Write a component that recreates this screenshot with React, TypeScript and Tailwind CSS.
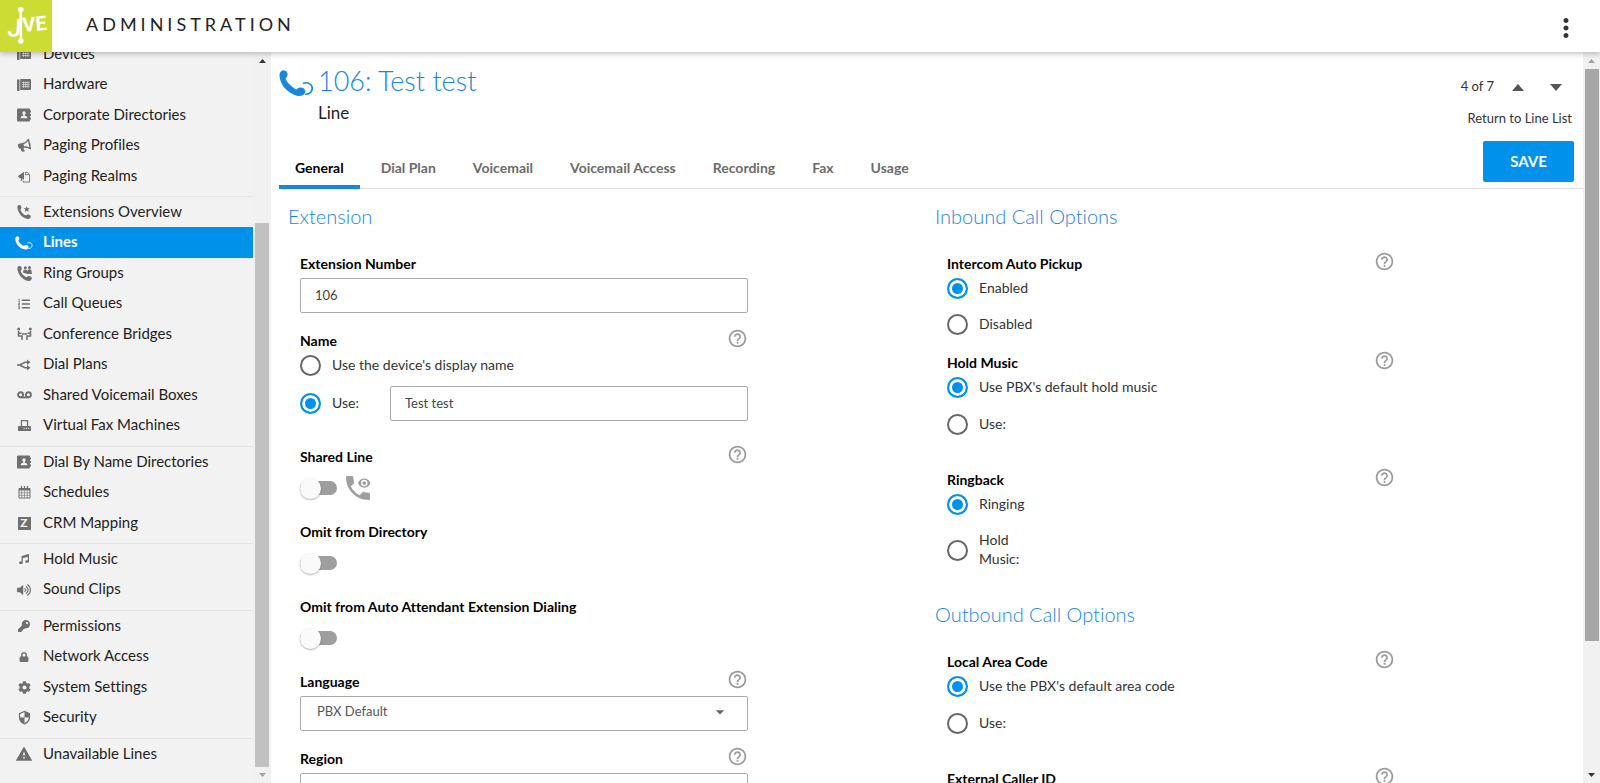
import type { ReactNode } from "react";
import clsx from "clsx";
import {
  FaBullhorn,
  FaCog,
  FaKey,
  FaListOl,
  FaLock,
  FaMusic,
  FaVolumeUp,
} from "react-icons/fa";
import {
  MdArrowDropDown,
  MdHelpOutline,
  MdMoreVert,
  MdSecurity,
  MdWarning,
} from "react-icons/md";

const HANDSET =
  "M6.62 10.79c1.44 2.83 3.76 5.14 6.59 6.59l2.2-2.2c.27-.27.67-.36 1.02-.24 1.12.37 2.33.57 3.57.57.55 0 1 .45 1 1V20c0 .55-.45 1-1 1-9.39 0-17-7.61-17-17 0-.55.45-1 1-1h3.5c.55 0 1 .45 1 1 0 1.25.2 2.45.57 3.57.11.35.03.74-.25 1.02l-2.2 2.2z";

// Rounded handset used by the small extension icons
const ROUND_HANDSET =
  "M3.500 6C3.300 4 5 2.600 6.600 3C8.300 3.500 9 5.600 8.500 7.300C8.200 8.300 7.200 8.600 7.600 9.700C8.800 12.500 11 14.900 13.800 16.200C14.900 16.700 15.200 15.500 16.300 15.200C18 14.700 20.300 15.600 20.700 17.300C21 19.300 19.500 20.900 17.500 21C10.500 21 3.700 13 3.500 6Z";

const LineIcon = ({ className }: { className?: string }) => (
  <svg viewBox="0 0 35 27" className={className} fill="currentColor">
    <path d="M0.5 5C.5 2 3 0 5.500.4C8 1 9 3.500 8.500 5.500C8 7.200 6.500 7.800 6.700 9C8.500 13 12.500 17 17 19.500C18.300 18.500 19.500 17.200 22 17.400C25 17.600 27 20 26.200 22.500C25 25.500 21.500 26.600 18 25.800C8.500 23.500.5 14 .5 5Z" />
    <path
      d="M24 13.500C27 12 31.500 12.600 33 16.500C34.300 20.500 31 24.600 26 24.200"
      fill="none"
      stroke="currentColor"
      strokeWidth="1.600"
    />
  </svg>
);

const DeskPhoneIcon = () => (
  <svg viewBox="0 0 14 14" className="size-[14px]" fill="currentColor">
    <path d="M0 1.500h2.500V13h-1.500a1 1 0 0 1-1-1z" />
    <path d="M3.200 1H13a1 1 0 0 1 1 1v9a1 1 0 0 1-1 1H3.200z" />
    <path
      d="M5 4.500h7.500M5 6.500h7.500M5 8.500h7.500M6.500 3.500v6.500M8.700 3.500v6.500M11 3.500v6.500"
      stroke="#f2f2f2"
      strokeWidth=".6"
    />
  </svg>
);

const DirectoryIcon = () => (
  <svg viewBox="0 0 14 14" className="size-[14px]" fill="currentColor">
    <path d="M1 .5h11a1 1 0 0 1 1 1v11a1 1 0 0 1-1 1H1a1 1 0 0 1-1-1v-11a1 1 0 0 1 1-1z" />
    <path d="M13 2.500h1v2h-1zM13 6h1v2h-1zM13 9.500h1v2h-1z" />
    <circle cx="7" cy="5" r="1.700" fill="#f2f2f2" />
    <path d="M6.300 6h1.400v1.700c1.800.2 2.700.8 2.700 2.600H3.600c0-1.800.9-2.400 2.700-2.600z" fill="#f2f2f2" />
  </svg>
);

const PagingRealmIcon = () => (
  <svg viewBox="0 0 14 14" className="size-[13px]" fill="currentColor">
    <path d="M0 6.500L6.500 2v8.500L4.500 9.200v2.300H3V8.600L1 8.400z" />
    <path
      d="M8 5h4.500v8H5.500v-1.500M8 5V2.500h2.200L12.500 5"
      fill="none"
      stroke="currentColor"
    />
  </svg>
);

const PhoneStarIcon = () => (
  <svg viewBox="3 3 18 18" className="size-[14px]" fill="currentColor">
    <path d={ROUND_HANDSET} />
    <path d="M15.500 4.500l1.100 2.600 2.900.2-2.200 1.900.7 2.800-2.500-1.500-2.500 1.500.7-2.800-2.200-1.900 2.900-.2z" />
  </svg>
);

const PhoneGroupIcon = () => (
  <svg viewBox="3 3 18 18" className="size-[15px]" fill="currentColor">
    <path d={ROUND_HANDSET} />
    <circle cx="13" cy="5.200" r="1.800" />
    <circle cx="18" cy="4.800" r="1.800" />
    <path d="M10.300 11c0-3 1-3.700 2.700-3.700 1.500 0 2.300 1 2.500 2.700 0-2.400 1-3 2.500-3 1.900 0 2.700 1 2.700 3.700v1.800h-5z" />
  </svg>
);

const ConferenceIcon = () => (
  <svg viewBox="0 0 15 14" className="h-[14px] w-[15px]" fill="currentColor">
    <circle cx="1.700" cy="2" r="1.500" />
    <circle cx="13.300" cy="2" r="1.500" />
    <path
      d="M1.500 4v5H5v4M13.500 4v5H10v4M2 6.200h2.500M13 6.200h-2.500M5 7h5"
      fill="none"
      stroke="currentColor"
      strokeWidth="1.500"
    />
  </svg>
);

const DialPlanIcon = () => (
  <svg viewBox="0 0 14 12" className="h-[12px] w-[14px]" fill="currentColor">
    <path
      d="M0 6h2.500L8 3.200h3M2.500 6L8 8.800h3"
      fill="none"
      stroke="currentColor"
      strokeWidth="1.600"
    />
    <path d="M10 .5L13.500 3.200 10 6zM10 6l3.500 2.800L10 11.500z" />
  </svg>
);

const VoicemailIcon = () => (
  <svg viewBox="0 0 15 8" className="h-2 w-[15px]" fill="none" stroke="currentColor" strokeWidth="1.900">
    <circle cx="3.600" cy="3.800" r="2.500" />
    <circle cx="11.400" cy="3.800" r="2.500" />
    <path d="M3.600 6.400h7.800" />
  </svg>
);

const FaxIcon = () => (
  <svg viewBox="0 0 14 14" className="size-[13px]" fill="currentColor">
    <path d="M3.700 8V1.700h6.600V8" fill="none" stroke="currentColor" strokeWidth="1.400" />
    <path d="M1 7.500h12a1 1 0 0 1 1 1V12a1 1 0 0 1-1 1H1a1 1 0 0 1-1-1V8.500a1 1 0 0 1 1-1z" />
    <path d="M6 10h1.200M8.500 10h1.200M11 10h1.200" stroke="#f2f2f2" strokeWidth="1.200" />
  </svg>
);

const CalendarIcon = () => (
  <svg viewBox="0 0 13 13" className="size-[13px]" fill="none" stroke="currentColor">
    <path d="M1 2.500h11v9.500H1z" />
    <path d="M1 3.500h11" strokeWidth="2" />
    <path d="M3.500 0v3M6.500 0v3M9.500 0v3" strokeWidth="1.200" />
    <path d="M1 6.800h11M1 9.300h11M3.700 4.500V12M6.500 4.500V12M9.300 4.500V12" strokeWidth=".6" />
  </svg>
);

const PhoneEyeIcon = () => (
  <svg viewBox="3 3 18 18" className="size-6 text-[#9e9e9e]" fill="currentColor">
    <path d={HANDSET} />
    <path
      fillRule="evenodd"
      d="M16.700 4.800c2.100 0 3.900 1.400 4.700 3.500-.8 2.100-2.600 3.500-4.700 3.500S12.800 10.400 12 8.300c.8-2.100 2.600-3.500 4.700-3.500zm0 1.100a2.400 2.400 0 1 0 0 4.800 2.400 2.400 0 0 0 0-4.800z"
    />
    <circle cx="16.700" cy="8.300" r="1.400" />
  </svg>
);

const CrmIcon = () => (
  <span className="flex size-[13px] items-center justify-center bg-[#6f6f6f] text-xs leading-none font-black text-[#f2f2f2]">
    Z
  </span>
);

type NavItem = { label: string; icon: ReactNode; active?: boolean };

const navGroups: NavItem[][] = [
  [
    { label: "Devices", icon: <DeskPhoneIcon /> },
    { label: "Hardware", icon: <DeskPhoneIcon /> },
    { label: "Corporate Directories", icon: <DirectoryIcon /> },
    {
      label: "Paging Profiles",
      icon: <FaBullhorn size={13} className="-rotate-12" />,
    },
    { label: "Paging Realms", icon: <PagingRealmIcon /> },
  ],
  [
    { label: "Extensions Overview", icon: <PhoneStarIcon /> },
    {
      label: "Lines",
      icon: <LineIcon className="h-[14px] w-[18px]" />,
      active: true,
    },
    { label: "Ring Groups", icon: <PhoneGroupIcon /> },
    { label: "Call Queues", icon: <FaListOl size={12} /> },
    { label: "Conference Bridges", icon: <ConferenceIcon /> },
    { label: "Dial Plans", icon: <DialPlanIcon /> },
    { label: "Shared Voicemail Boxes", icon: <VoicemailIcon /> },
    { label: "Virtual Fax Machines", icon: <FaxIcon /> },
  ],
  [
    { label: "Dial By Name Directories", icon: <DirectoryIcon /> },
    { label: "Schedules", icon: <CalendarIcon /> },
    { label: "CRM Mapping", icon: <CrmIcon /> },
  ],
  [
    { label: "Hold Music", icon: <FaMusic size={10} /> },
    { label: "Sound Clips", icon: <FaVolumeUp size={14} /> },
  ],
  [
    { label: "Permissions", icon: <FaKey size={12} /> },
    { label: "Network Access", icon: <FaLock size={10} /> },
    { label: "System Settings", icon: <FaCog size={13} /> },
    { label: "Security", icon: <MdSecurity size={15} /> },
  ],
  [{ label: "Unavailable Lines", icon: <MdWarning size={18} /> }],
];

const tabs = [
  "General",
  "Dial Plan",
  "Voicemail",
  "Voicemail Access",
  "Recording",
  "Fax",
  "Usage",
];

const JiveLogo = () => (
  <svg
    viewBox="0 0 52 52"
    className="size-[52px] bg-[#cddb35] font-['Roboto',sans-serif]"
    fill="#fff"
    role="img"
    aria-label="Jive"
  >
    <text x="7" y="36" fontSize="25" fontWeight="500" transform="rotate(4 7 36)">
      J
    </text>
    <path d="M20.800 9v32" stroke="#fff" strokeWidth="2.500" />
    <circle cx="20.800" cy="9.500" r="2.800" />
    <circle cx="20.800" cy="41" r="2.800" />
    <text x="23" y="32" fontSize="20" fontWeight="700" transform="rotate(-5 23 32)">
      VE
    </text>
  </svg>
);

const Arrow = ({ up, className }: { up?: boolean; className?: string }) => (
  <svg viewBox="0 0 12 7" className={className} fill="currentColor">
    <path d={up ? "M0 7L6 0l6 7z" : "M0 0h12L6 7z"} />
  </svg>
);

const ScrollRail = ({ side }: { side: "nav" | "page" }) => {
  const isNav = side === "nav";

  return (
    <div
      aria-hidden="true"
      className={clsx(
        "flex shrink-0 flex-col items-center bg-[#f1f1f1]",
        isNav ? "w-[18px]" : "w-[17px]",
      )}
    >
      <div className="flex h-[17px] items-center">
        <Arrow
          up
          className={clsx("h-1 w-[7px]", isNav ? "text-[#333]" : "text-[#a0a0a0]")}
        />
      </div>
      <div
        className={clsx("flex w-[14px] flex-1 flex-col", isNav && "justify-end")}
      >
        <div
          className={isNav ? "h-[78%] bg-[#c1c1c1]" : "h-[82%] bg-[#a8a8a8]"}
        />
      </div>
      <div className="flex h-4 items-center">
        <Arrow
          className={clsx("h-1 w-[7px]", isNav ? "text-[#a0a0a0]" : "text-[#333]")}
        />
      </div>
    </div>
  );
};

const Sidebar = () => (
  <aside className="flex w-[271px] shrink-0 overflow-hidden bg-[#f2f2f2]">
    <nav className="-mt-[13px] min-w-0 flex-1">
      {navGroups.map((group, index) => (
        <ul
          key={group[0].label}
          className={clsx("pb-[5px]", index > 0 && "border-t border-[#e2e2e2]")}
        >
          {group.map((item) => (
            <li key={item.label} className="h-[30px] even:h-[31px]">
              <a
                href="#"
                className={clsx(
                  "flex h-full items-center gap-[9px] pb-0.5 pl-[14px] text-[15px] whitespace-nowrap",
                  item.active
                    ? "bg-[#0091ea] font-bold text-white"
                    : "text-[#222]",
                )}
              >
                <span
                  className={clsx(
                    "flex w-5 justify-center pt-0.5",
                    !item.active && "text-[#6f6f6f]",
                  )}
                >
                  {item.icon}
                </span>
                {item.label}
              </a>
            </li>
          ))}
        </ul>
      ))}
    </nav>
    <ScrollRail side="nav" />
  </aside>
);

const FieldHeader = ({
  title,
  htmlFor,
  help,
}: {
  title: string;
  htmlFor?: string;
  help?: boolean;
}) => (
  <div className="flex h-5 items-start justify-between text-sm leading-5 font-bold text-black">
    {htmlFor ? <label htmlFor={htmlFor}>{title}</label> : <span>{title}</span>}
    {help && (
      <button
        type="button"
        aria-label={`Help: ${title}`}
        className="flex h-[14px] items-center text-[#9a9a9a]"
      >
        <MdHelpOutline size={21} />
      </button>
    )}
  </div>
);

const Radio = ({
  name,
  label,
  checked,
  narrow,
}: {
  name: string;
  label: string;
  checked?: boolean;
  narrow?: boolean;
}) => (
  <label
    className={clsx(
      "flex min-h-[21px] items-center gap-[11px] text-sm leading-[19px] text-[#333]",
      narrow && "w-20",
    )}
  >
    <input
      type="radio"
      name={name}
      defaultChecked={checked}
      className="size-[21px] shrink-0 appearance-none rounded-full border-2 border-[#666] checked:border-[#0091ea] checked:bg-[#0091ea] checked:shadow-[inset_0_0_0_3px_#fff]"
    />
    <span className="pb-0.5">{label}</span>
  </label>
);

const Toggle = ({ id, children }: { id: string; children?: ReactNode }) => (
  <div className="mt-[9px] flex h-6 items-center gap-[9px]">
    <input
      type="checkbox"
      id={id}
      className="flex h-[14px] w-[37px] appearance-none items-center rounded-full bg-[#9e9e9e] before:size-[21px] before:shrink-0 before:rounded-full before:bg-[#fafafa] before:shadow-[0_1px_2px_rgba(0,0,0,0.3)] checked:justify-end"
    />
    {children}
  </div>
);

const SelectBox = ({ id, value }: { id: string; value: string }) => (
  <div className="mt-1 grid items-center">
    <select
      id={id}
      className="col-start-1 row-start-1 h-[35px] w-full appearance-none rounded-xs border border-[#aaa] bg-white px-4 pb-1 text-[13px] text-[#555]"
    >
      <option>{value}</option>
    </select>
    <MdArrowDropDown
      size={20}
      className="pointer-events-none col-start-1 row-start-1 mr-[18px] mb-1 justify-self-end text-[#666]"
    />
  </div>
);

const inputClass =
  "h-[35px] w-full rounded-xs border border-[#aaa] bg-white px-[14px] pb-0.5 text-[13px] text-[#444]";

const SectionTitle = ({ children }: { children: ReactNode }) => (
  <h2 className="mb-[23px] text-xl leading-[30px] font-light text-[#1787dc]">
    {children}
  </h2>
);

const ExtensionSection = () => (
  <section>
    <SectionTitle>Extension</SectionTitle>
    <div className="ml-3 max-w-[448px]">
      <FieldHeader title="Extension Number" htmlFor="extension" />
      <input id="extension" defaultValue="106" className={clsx("mt-1", inputClass)} />

      <div className="mt-[18px]">
        <FieldHeader title="Name" help />
        <div className="mt-1">
          <Radio name="name" label="Use the device's display name" />
        </div>
        <div className="mt-[10px] flex items-center">
          <div className="w-[90px] shrink-0">
            <Radio name="name" label="Use:" checked />
          </div>
          <input aria-label="Name" defaultValue="Test test" className={inputClass} />
        </div>
      </div>

      <div className="mt-[26px]">
        <FieldHeader title="Shared Line" htmlFor="shared" help />
        <Toggle id="shared">
          <PhoneEyeIcon />
        </Toggle>
      </div>

      <div className="mt-[22px]">
        <FieldHeader title="Omit from Directory" htmlFor="omit-directory" />
        <Toggle id="omit-directory" />
      </div>

      <div className="mt-[22px]">
        <FieldHeader
          title="Omit from Auto Attendant Extension Dialing"
          htmlFor="omit-attendant"
        />
        <Toggle id="omit-attendant" />
      </div>

      <div className="mt-[22px]">
        <FieldHeader title="Language" htmlFor="language" help />
        <SelectBox id="language" value="PBX Default" />
      </div>

      <div className="mt-[18px]">
        <FieldHeader title="Region" htmlFor="region" help />
        <SelectBox id="region" value="PBX Default" />
      </div>
    </div>
  </section>
);

const CallOptionsSection = () => (
  <div>
    <section>
      <SectionTitle>Inbound Call Options</SectionTitle>
      <div className="ml-3 max-w-[448px]">
        <FieldHeader title="Intercom Auto Pickup" help />
        <div className="mt-1 flex flex-col gap-[15px]">
          <Radio name="intercom" label="Enabled" checked />
          <Radio name="intercom" label="Disabled" />
        </div>

        <div className="mt-[18px]">
          <FieldHeader title="Hold Music" help />
          <div className="mt-1 flex flex-col gap-4">
            <Radio name="hold" label="Use PBX's default hold music" checked />
            <Radio name="hold" label="Use:" />
          </div>
        </div>

        <div className="mt-[35px]">
          <FieldHeader title="Ringback" help />
          <div className="mt-1 flex flex-col gap-[15px]">
            <Radio name="ringback" label="Ringing" checked />
            <Radio name="ringback" label="Hold Music:" narrow />
          </div>
        </div>
      </div>
    </section>

    <section className="mt-[29px]">
      <SectionTitle>Outbound Call Options</SectionTitle>
      <div className="ml-3 max-w-[448px]">
        <FieldHeader title="Local Area Code" help />
        <div className="mt-1 flex flex-col gap-4">
          <Radio name="area" label="Use the PBX's default area code" checked />
          <Radio name="area" label="Use:" />
        </div>

        <div className="mt-[35px]">
          <FieldHeader title="External Caller ID" help />
        </div>
      </div>
    </section>
  </div>
);

const LineHeader = () => (
  <div className="ml-2 flex items-end justify-between border-b border-[#ddd]">
    <div className="self-stretch pt-[13px]">
      <div className="flex gap-1">
        <LineIcon className="mt-[5px] h-[27px] w-[35px] text-[#1787dc]" />
        <div>
          <h1 className="text-[27px] leading-8 font-light text-[#1787dc]">
            106: Test test
          </h1>
          <p className="mt-1 text-[17px] leading-6 text-[#222]">Line</p>
        </div>
      </div>
      <div role="tablist" className="-mb-px mt-6 flex gap-[5px]">
        {tabs.map((tab, index) => (
          <button
            key={tab}
            type="button"
            role="tab"
            aria-selected={index === 0}
            className={clsx(
              "h-10 border-b-4 px-4 pt-px text-sm font-bold whitespace-nowrap",
              index === 0
                ? "border-[#1787dc] text-black"
                : "border-transparent text-[#6b6b6b]",
            )}
          >
            {tab}
          </button>
        ))}
      </div>
    </div>

    <div className="flex flex-col items-end pt-6 pr-[9px] pb-[6px] text-[13px] text-[#333]">
      <div className="mr-3 flex h-[22px] items-center">
        <span>4 of 7</span>
        <button type="button" aria-label="Previous line" className="ml-[18px]">
          <Arrow up className="h-[7px] w-3 text-[#555]" />
        </button>
        <button type="button" aria-label="Next line" className="ml-[26px]">
          <Arrow className="h-[7px] w-3 text-[#555]" />
        </button>
      </div>
      <a href="#" className="mt-[10px] mr-[2px] leading-5">
        Return to Line List
      </a>
      <button
        type="button"
        className="mt-[13px] h-[41px] w-[91px] rounded-xs bg-[#0091ea] text-[15px] font-bold text-white"
      >
        SAVE
      </button>
    </div>
  </div>
);

export default function App() {
  return (
    <div className="flex h-screen flex-col overflow-hidden bg-white font-['Lato',sans-serif] [font-variant-ligatures:none]">
      <header className="relative z-10 flex h-[52px] shrink-0 items-center bg-white shadow-[0_1px_6px_rgba(0,0,0,0.3)]">
        <JiveLogo />
        <span className="ml-[34px] flex-1 pb-1 text-lg leading-6 tracking-[4px] text-[#222]">
          ADMINISTRATION
        </span>
        <button type="button" aria-label="More" className="mt-1 mr-[19px] text-[#333]">
          <MdMoreVert size={30} />
        </button>
      </header>

      <div className="flex min-h-0 flex-1">
        <Sidebar />
        <main className="min-w-0 flex-1 overflow-hidden">
          <LineHeader />
          <div className="mr-px ml-[17px] grid grid-cols-2 pt-3">
            <ExtensionSection />
            <CallOptionsSection />
          </div>
        </main>
        <ScrollRail side="page" />
      </div>
    </div>
  );
}
